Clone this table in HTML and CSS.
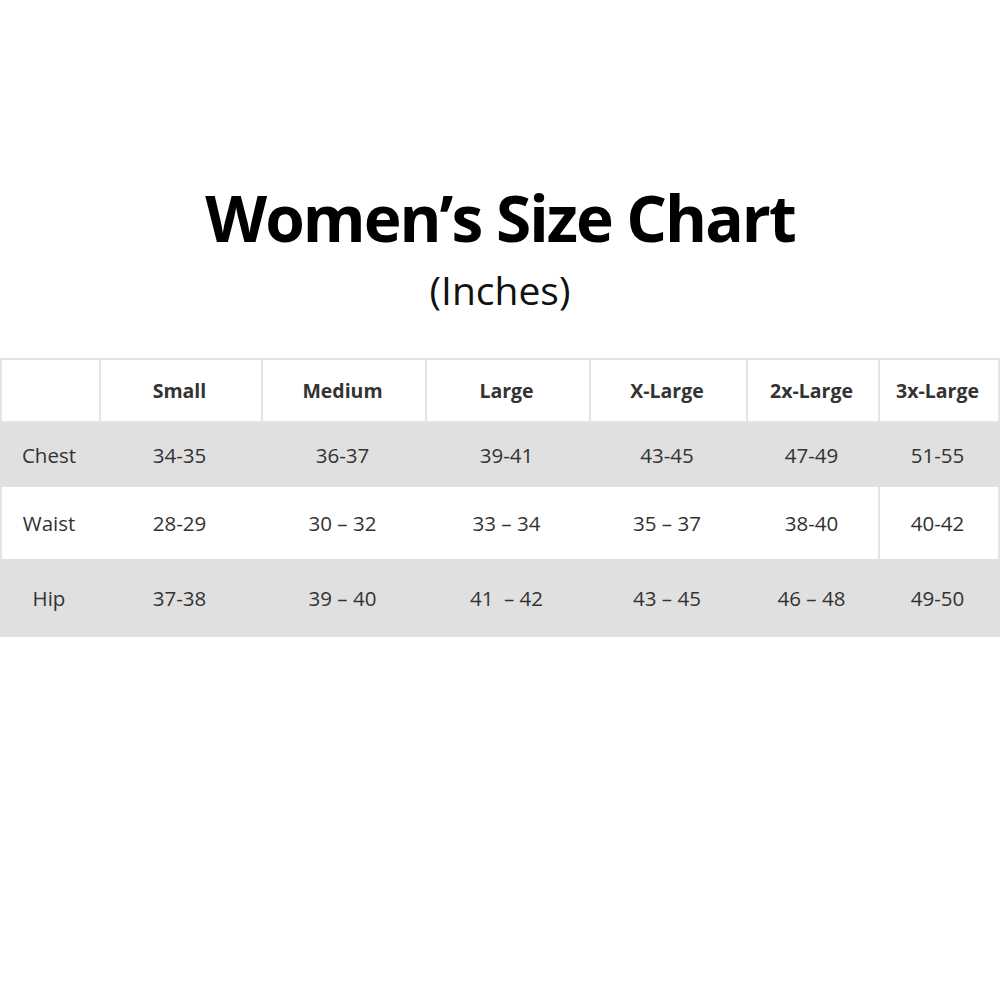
FILE: index.html
```html
<!DOCTYPE html>
<html lang="en">
<head>
<meta charset="utf-8">
<title>Women's Size Chart</title>
<link rel="stylesheet" href="styles.css">
</head>
<body>
<header class="heading">
  <h1 class="title">Women’s Size Chart</h1>
  <p class="subtitle">(Inches)</p>
</header>
<div class="chart" role="table">
  <div class="row row-head" role="row">
    <div class="cell" role="columnheader"></div>
    <div class="cell" role="columnheader">Small</div>
    <div class="cell" role="columnheader">Medium</div>
    <div class="cell" role="columnheader">Large</div>
    <div class="cell" role="columnheader">X-Large</div>
    <div class="cell" role="columnheader">2x-Large</div>
    <div class="cell" role="columnheader">3x-Large</div>
  </div>
  <div class="row row-grey row-chest" role="row">
    <div class="cell label" role="rowheader">Chest</div>
    <div class="cell" role="cell">34-35</div>
    <div class="cell" role="cell">36-37</div>
    <div class="cell" role="cell">39-41</div>
    <div class="cell" role="cell">43-45</div>
    <div class="cell" role="cell">47-49</div>
    <div class="cell" role="cell">51-55</div>
  </div>
  <div class="row row-white row-waist" role="row">
    <div class="cell label" role="rowheader">Waist</div>
    <div class="cell" role="cell">28-29</div>
    <div class="cell" role="cell">30 – 32</div>
    <div class="cell" role="cell">33 – 34</div>
    <div class="cell" role="cell">35 – 37</div>
    <div class="cell" role="cell">38-40</div>
    <div class="cell cell-sep" role="cell">40-42</div>
  </div>
  <div class="row row-grey row-hip" role="row">
    <div class="cell label" role="rowheader">Hip</div>
    <div class="cell" role="cell">37-38</div>
    <div class="cell" role="cell">39 – 40</div>
    <div class="cell" role="cell">41&nbsp; – 42</div>
    <div class="cell" role="cell">43 – 45</div>
    <div class="cell" role="cell">46 – 48</div>
    <div class="cell" role="cell">49-50</div>
  </div>
</div>
</body>
</html>
```
FILE: styles.css
```css
* {
  box-sizing: border-box;
}

html, body {
  margin: 0;
  padding: 0;
  background: #ffffff;
}

body {
  width: 1000px;
  height: 1000px;
  font-family: "Open Sans", "Noto Sans", "Liberation Sans", sans-serif;
  color: #333333;
}

.heading {
  text-align: center;
  padding-top: 186px;
}

.title {
  margin: 0;
  font-size: 64px;
  line-height: 64px;
  font-weight: 700;
  letter-spacing: -2px;
  color: #000000;
}

.subtitle {
  margin: 20px 0 0;
  font-size: 39px;
  line-height: 39px;
  font-weight: 400;
  color: #111111;
}

.chart {
  margin-top: 49px;
  width: 1000px;
}

.row {
  display: grid;
  grid-template-columns: 97px 160px 162px 162px 155px 130px 118px;
  column-gap: 2px;
  padding: 0 2px;
}

.cell {
  display: flex;
  align-items: center;
  justify-content: center;
  font-size: 20.5px;
  white-space: pre;
  padding-right: 3px;
}

.row-head {
  background: #e4e4e4;
  padding: 2px;
  height: 65px;
}

.row-head .cell {
  background: #ffffff;
  font-weight: 700;
  font-size: 19.5px;
  color: #333333;
}

.row-grey {
  background: #e0e0e0;
}

.row-chest {
  height: 64px;
}

.row-waist {
  height: 72px;
}

.row-hip {
  height: 78px;
}

.row-white {
  background: #ffffff;
  padding: 0;
  border-left: 2px solid #e4e4e4;
  border-right: 2px solid #e4e4e4;
}

.cell-sep {
  box-shadow: -2px 0 0 #e4e4e4;
}

.label {
  padding-right: 3px;
}
```
